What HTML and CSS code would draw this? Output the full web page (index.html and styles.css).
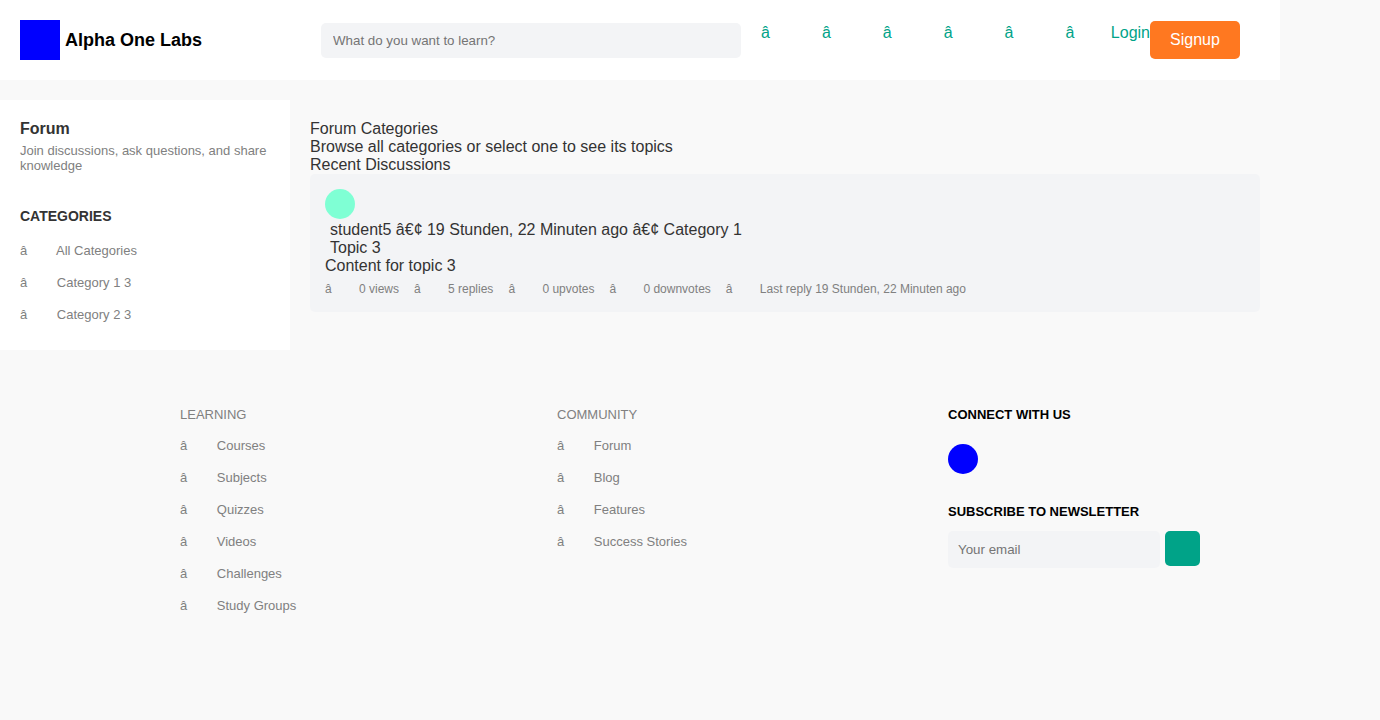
FILE: index.html
```html
<!DOCTYPE html>
<html lang="en">
<head>
<meta charset="utf-8">
<title>Alpha One Labs</title>
<link rel="stylesheet" href="styles.css">
</head>
<body>
<div class="page">
  <header class="header">
    <div class="brand"><span class="logo"></span><span class="brand-name">Alpha One Labs</span></div>
    <input class="search" type="text" placeholder="What do you want to learn?">
    <nav class="nav">
      <span class="nav-icon">â</span><span class="nav-icon">â</span><span class="nav-icon">â</span><span class="nav-icon">â</span><span class="nav-icon">â</span><span class="nav-icon last">â</span>
      <a class="login">Login</a>
      <a class="signup">Signup</a>
    </nav>
  </header>
  <div class="content">
    <aside class="sidebar">
      <h1 class="side-title">Forum</h1>
      <p class="side-text">Join discussions, ask questions, and share knowledge</p>
      <h2 class="side-heading">CATEGORIES</h2>
      <ul class="links">
        <li><span class="icon tight">â</span>All Categories</li>
        <li><span class="icon">â</span>Category 1 3</li>
        <li><span class="icon">â</span>Category 2 3</li>
      </ul>
    </aside>
    <main class="main">
      <div>Forum Categories</div>
      <div>Browse all categories or select one to see its topics</div>
      <div>Recent Discussions</div>
      <article class="card">
        <div class="avatar"></div>
        <div class="topic">
          <div>student5 â€¢ 19 Stunden, 22 Minuten ago â€¢ Category 1</div>
          <div>Topic 3</div>
        </div>
        <div>Content for topic 3</div>
        <div class="stats">
          <span><i class="stat-icon">â</i>0 views</span>
          <span><i class="stat-icon">â</i>5 replies</span>
          <span><i class="stat-icon">â</i>0 upvotes</span>
          <span><i class="stat-icon">â</i>0 downvotes</span>
          <span><i class="stat-icon">â</i>Last reply 19 Stunden, 22 Minuten ago</span>
        </div>
      </article>
    </main>
  </div>
  <footer class="footer">
    <section>
      <div class="foot-title">LEARNING</div>
      <ul class="links">
        <li><span class="icon">â</span>Courses</li>
        <li><span class="icon">â</span>Subjects</li>
        <li><span class="icon">â</span>Quizzes</li>
        <li><span class="icon">â</span>Videos</li>
        <li><span class="icon">â</span>Challenges</li>
        <li><span class="icon">â</span>Study Groups</li>
      </ul>
    </section>
    <section>
      <div class="foot-title">COMMUNITY</div>
      <ul class="links">
        <li><span class="icon">â</span>Forum</li>
        <li><span class="icon">â</span>Blog</li>
        <li><span class="icon">â</span>Features</li>
        <li><span class="icon">â</span>Success Stories</li>
      </ul>
    </section>
    <section class="connect">
      <h3 class="connect-title">CONNECT WITH US</h3>
      <div class="social"></div>
      <h3 class="connect-title">SUBSCRIBE TO NEWSLETTER</h3>
      <div class="subscribe">
        <input class="email" type="email" placeholder="Your email">
        <button class="send" type="button" aria-label="Subscribe"></button>
      </div>
    </section>
  </footer>
</div>
</body>
</html>
```
FILE: styles.css
```css
* { box-sizing: border-box; margin: 0; padding: 0; }
body {
  background: #f9f9f9;
  color: #333;
  font: 16px/18px "Liberation Sans", Arial, sans-serif;
}
.page { width: 1280px; }
.header {
  display: grid;
  grid-template-columns: 301px 420px 1fr;
  align-items: center;
  height: 80px;
  padding: 0 20px;
  background: #fff;
}
.brand { display: flex; align-items: center; gap: 5px; }
.logo { width: 40px; height: 40px; background: #00f; }
.brand-name { color: #000; font-size: 18px; font-weight: bold; line-height: 20px; }
.search, .email {
  border: 0;
  border-radius: 5px;
  background: #f3f4f6;
  font: 13.333px/15px "Liberation Sans", Arial, sans-serif;
}
.search { width: 420px; height: 35px; padding: 0 12px; }
.search::placeholder, .email::placeholder { color: #757575; }
.nav { display: flex; height: 38px; padding-left: 20px; color: #00a388; }
.nav-icon { width: 60.9px; padding-top: 3px; }
.nav-icon.last { width: 45.4px; }
.login { padding-top: 3px; }
.signup { padding: 10px 20px; border-radius: 5px; background: #ff7820; color: #fff; }
.content { display: flex; align-items: flex-start; margin-top: 20px; }
.sidebar { width: 290px; height: 250px; padding: 20px; background: #fff; }
.side-title { font-size: 16px; line-height: 18px; }
.side-text { margin-top: 5px; color: #808080; font-size: 13px; line-height: 15px; }
.side-heading { margin: 35px 0 19px; font-size: 14px; line-height: 16px; }
.links {
  display: flex;
  flex-direction: column;
  gap: 17px;
  list-style: none;
  color: #808080;
  font-size: 13px;
  line-height: 15px;
}
.icon { display: inline-block; width: 36.8px; }
.icon.tight { width: 36px; }
.main { flex: 1; padding: 20px; }
.card { height: 138px; padding: 15px; border-radius: 5px; background: #f3f4f6; }
.avatar { width: 30px; height: 30px; border-radius: 50%; background: #7fffd4; }
.topic { padding: 2px 5px 0; }
.stats {
  display: flex;
  gap: 15px;
  margin-top: 7px;
  color: #808080;
  font-size: 12px;
  line-height: 14px;
}
.stat-icon { display: inline-block; width: 34px; font-style: normal; }
.footer { display: grid; grid-template-columns: 377px 391px 252px; padding: 57px 0 0 180px; }
.foot-title { margin-bottom: 16px; color: #808080; font-size: 13px; line-height: 15px; }
.connect-title { color: #000; font-size: 13px; line-height: 15px; }
.social { width: 30px; height: 30px; margin: 22px 0 30px; border-radius: 50%; background: #00f; }
.subscribe { display: flex; align-items: flex-start; gap: 5px; margin-top: 12px; }
.email { width: 212px; height: 37px; padding: 0 10px; }
.send { width: 35px; height: 35px; border: 0; border-radius: 5px; background: #00a388; }
```
